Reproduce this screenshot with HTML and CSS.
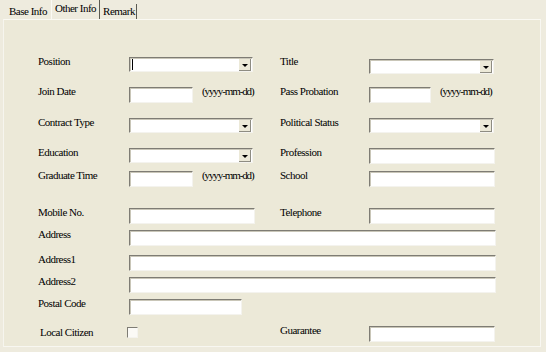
FILE: index.html
```html
<!DOCTYPE html>
<html lang="en">
<head>
    <meta charset="UTF-8">
    <title>Employee - Other Info</title>
    <link rel="stylesheet" href="styles.css">
</head>
<body>
    <div class="tabs">
        <span class="tab">Base Info</span>
        <span class="tab active">Other Info</span>
        <span class="tab last">Remark</span>
    </div>

    <div class="panel">
        <div class="row">
            <span class="label">Position</span>
            <div class="combo"><span class="caret"></span><span class="drop"></span></div>
            <span class="label">Title</span>
            <div class="combo wide lower"><span class="drop"></span></div>
        </div>
        <div class="row gap14">
            <span class="label">Join Date</span>
            <div class="date"><div class="field short"></div><span class="hint">(yyyy-mm-dd)</span></div>
            <span class="label">Pass Probation</span>
            <div class="date"><div class="field shorter"></div><span class="hint">(yyyy-mm-dd)</span></div>
        </div>
        <div class="row gap15">
            <span class="label">Contract Type</span>
            <div class="combo"><span class="drop"></span></div>
            <span class="label">Political Status</span>
            <div class="combo wide"><span class="drop"></span></div>
        </div>
        <div class="row gap14">
            <span class="label">Education</span>
            <div class="combo"><span class="drop"></span></div>
            <span class="label">Profession</span>
            <div class="field wide"></div>
        </div>
        <div class="row gap7">
            <span class="label">Graduate Time</span>
            <div class="date"><div class="field short"></div><span class="hint">(yyyy-mm-dd)</span></div>
            <span class="label">School</span>
            <div class="field wide"></div>
        </div>
        <div class="row gap21">
            <span class="label">Mobile No.</span>
            <div class="field mid"></div>
            <span class="label">Telephone</span>
            <div class="field wide"></div>
        </div>
        <div class="row gap6">
            <span class="label">Address</span>
            <div class="field full"></div>
        </div>
        <div class="row gap9">
            <span class="label">Address1</span>
            <div class="field full"></div>
        </div>
        <div class="row gap6">
            <span class="label">Address2</span>
            <div class="field full"></div>
        </div>
        <div class="row gap6">
            <span class="label">Postal Code</span>
            <div class="field postal"></div>
        </div>
        <div class="row gap11">
            <span class="label indent">Local Citizen</span>
            <div class="check-cell"><span class="check"></span></div>
            <span class="label">Guarantee</span>
            <div class="field wide"></div>
        </div>
    </div>
</body>
</html>
```

FILE: styles.css
```css
body {
    margin: 0;
    background-color: #EEEBDE;
    font-family: "Liberation Serif", "DejaVu Serif", serif;
    font-size: 11px;
    letter-spacing: -0.5px;
    color: #000;
}

/* tab strip */
.tabs {
    display: flex;
    height: 19px;
    padding-left: 3px;
    align-items: flex-end;
}
.tab {
    height: 15px;
    line-height: 15px;
    padding: 0 4px 0 6px;
    box-sizing: border-box;
}
.tab.active {
    height: 19px;
    line-height: 16px;
    padding: 0 3px 0 3px;
    border-left: 1px solid #FAF9F4;
    border-right: 1px solid #5A5A52;
}
.tab.last {
    border-right: 1px solid #5A5A52;
    padding: 0 1px 0 3px;
}

/* page panel */
.panel {
    margin-left: 3px;
    width: 538px;
    height: 328px;
    box-sizing: border-box;
    background-color: #ECE9D8;
    border-top: 1px solid #FAF9F3;
    border-left: 1px solid #F6F5EE;
    border-right: 1px solid #F8F7F1;
    border-bottom: 1px solid #F8F7F1;
    padding: 37px 0 0 34px;
}

.row {
    display: grid;
    grid-template-columns: 91px 151px 89px 1fr;
    height: 16px;
    align-items: start;
}
.gap6 { margin-top: 6px; }
.gap7 { margin-top: 7px; }
.gap9 { margin-top: 9px; }
.gap11 { margin-top: 11px; }
.gap14 { margin-top: 14px; }
.gap15 { margin-top: 15px; }
.gap21 { margin-top: 21px; }

.label {
    line-height: 12px;
    margin-top: -2px;
    white-space: nowrap;
}
.label.indent {
    padding-left: 2px;
    margin-top: 0;
}

/* sunken text box */
.field {
    height: 16px;
    box-sizing: border-box;
    background-color: #fff;
    border-top: 1px solid #7E7C74;
    border-left: 1px solid #7E7C74;
    border-right: 1px solid #F4F3EE;
    border-bottom: 1px solid #F4F3EE;
    box-shadow: inset 1px 1px 0 #C9C6B8;
}
.field.short { width: 64px; }
.field.shorter { width: 62px; }
.field.mid { width: 126px; }
.field.wide { width: 126px; }
.field.postal { width: 113px; }
.field.full {
    grid-column: 2 / 5;
    width: 367px;
}

.date {
    display: flex;
    align-items: flex-start;
}
.hint {
    margin-left: 9px;
    margin-top: -2px;
    line-height: 12px;
    letter-spacing: -1.1px;
    white-space: nowrap;
}

/* combo box */
.combo {
    position: relative;
    width: 124px;
    height: 15px;
    box-sizing: border-box;
    background-color: #fff;
    border-top: 1px solid #7E7C74;
    border-left: 1px solid #7E7C74;
    border-right: 1px solid #F4F3EE;
    border-bottom: 1px solid #F4F3EE;
    box-shadow: inset 1px 1px 0 #C9C6B8;
}
.combo.wide { width: 125px; }
.combo.lower { margin-top: 2px; }
.caret {
    position: absolute;
    left: 2px;
    top: 1px;
    width: 1px;
    height: 11px;
    background-color: #000;
}
.drop {
    position: absolute;
    right: 1px;
    top: 1px;
    width: 11px;
    height: 11px;
    background-color: #ECE9D8;
    border-right: 1px solid #8E8C82;
    border-bottom: 1px solid #8E8C82;
}
.drop:before {
    content: "";
    position: absolute;
    left: 3px;
    top: 5px;
    border-left: 3px solid transparent;
    border-right: 3px solid transparent;
    border-top: 3px solid #000;
}

/* check box */
.check-cell {
    margin-left: -2px;
    margin-top: 1px;
}
.check {
    display: block;
    width: 11px;
    height: 11px;
    box-sizing: border-box;
    background-color: #FBFAF6;
    border-top: 1px solid #7E7C74;
    border-left: 1px solid #7E7C74;
    border-right: 1px solid #F4F3EE;
    border-bottom: 1px solid #F4F3EE;
}
```
